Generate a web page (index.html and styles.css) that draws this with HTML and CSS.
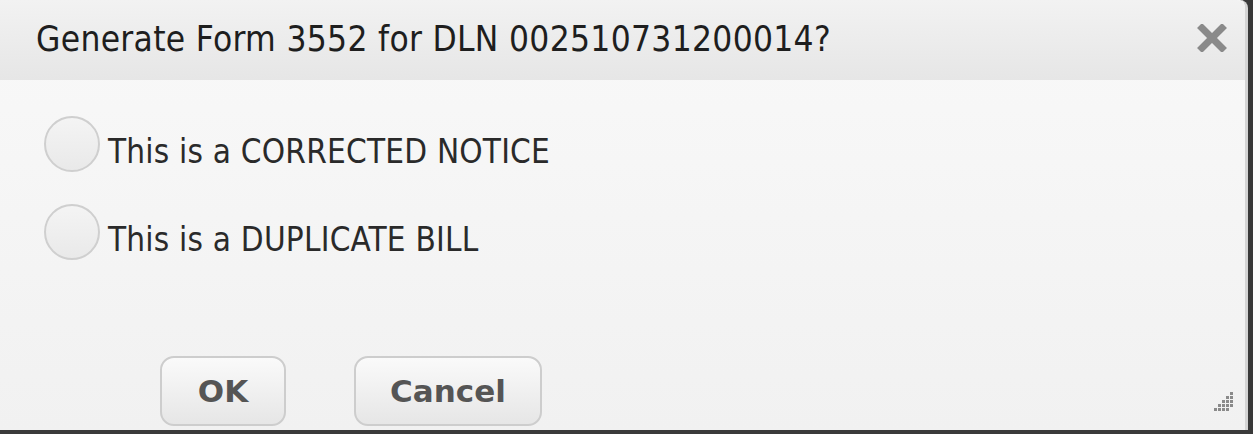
FILE: index.html
```html
<!DOCTYPE html>
<html>
<head>
	<title>Generate Form 3552</title>
	<link rel="stylesheet" href="styles.css">
</head>
<body>
<div class="dialog">
	<div class="titlebar">
		<span class="title">Generate Form 3552 for DLN 002510731200014?</span>
		<a href="javascript:;" class="close" title="Close">
			<svg width="30" height="28" viewBox="0 0 30 28"><path d="M5 4 L25 24 M25 4 L5 24" stroke="#8a8a8a" stroke-width="7" stroke-linecap="square"/></svg>
		</a>
	</div>
	<div class="content">
		<label class="option"><span class="radio"></span><span class="label-text">This is a CORRECTED NOTICE</span></label>
		<label class="option"><span class="radio"></span><span class="label-text">This is a DUPLICATE BILL</span></label>
	</div>
	<div class="buttons">
		<button class="btn btn-ok">OK</button>
		<button class="btn btn-cancel">Cancel</button>
	</div>
	<svg class="grip" width="22" height="22" viewBox="0 0 22 22">
		<g fill="#8a8a8a">
			<rect x="18" y="2" width="3" height="3"/>
			<rect x="14" y="6" width="3" height="3"/><rect x="18" y="6" width="3" height="3"/>
			<rect x="10" y="10" width="3" height="3"/><rect x="14" y="10" width="3" height="3"/><rect x="18" y="10" width="3" height="3"/>
			<rect x="6" y="14" width="3" height="3"/><rect x="10" y="14" width="3" height="3"/><rect x="14" y="14" width="3" height="3"/><rect x="18" y="14" width="3" height="3"/>
			<rect x="2" y="18" width="3" height="3"/><rect x="6" y="18" width="3" height="3"/><rect x="10" y="18" width="3" height="3"/><rect x="14" y="18" width="3" height="3"/>
		</g>
	</svg>
</div>
</body>
</html>
```

FILE: styles.css
```css
*{margin: 0;padding: 0;box-sizing: border-box;}
body{background: #3a3a3a;font-family: "DejaVu Sans Condensed", "DejaVu Sans", Verdana, sans-serif;color: #222;width: 1253px;height: 434px;overflow: hidden;}
.dialog{position: relative;width: 1248px;height: 430px;background: linear-gradient(#f9f9f9, #f1f1f1);border-right: 3px solid #d4d4d4;border-radius: 0 8px 0 0;display: flex;flex-direction: column;}
.titlebar{height: 80px;background: linear-gradient(#f2f2f2, #e6e6e6);display: flex;align-items: center;justify-content: space-between;padding: 0 18px 2px 36px;border-radius: 0 8px 0 0;}
.title{font-size: 35px;letter-spacing: 0.3px;color: #1e1e1e;}
.close{display: block;height: 28px;margin-top: -2px;}
.content{padding: 36px 0 0 44px;display: flex;flex-direction: column;gap: 32px;}
.option{display: flex;align-items: center;font-size: 33px;letter-spacing: 0.2px;color: #2a2a2a;height: 56px;}
.label-text{padding-top: 14px;}
.radio{width: 56px;height: 56px;border-radius: 50%;border: 2px solid #cfcfcf;background: linear-gradient(#f4f4f4, #e9e9e9);margin-right: 8px;}
.buttons{margin-top: auto;padding: 0 0 4px 160px;display: flex;gap: 68px;}
.btn{height: 70px;border: 2px solid #cdcdcd;border-radius: 14px;background: linear-gradient(#fafafa, #e6e6e6);font-family: "DejaVu Sans", Verdana, sans-serif;font-weight: bold;font-size: 31px;color: #555;}
.btn-ok{width: 126px;}
.btn-cancel{width: 188px;}
.grip{position: absolute;right: 11px;bottom: 18px;}
```
